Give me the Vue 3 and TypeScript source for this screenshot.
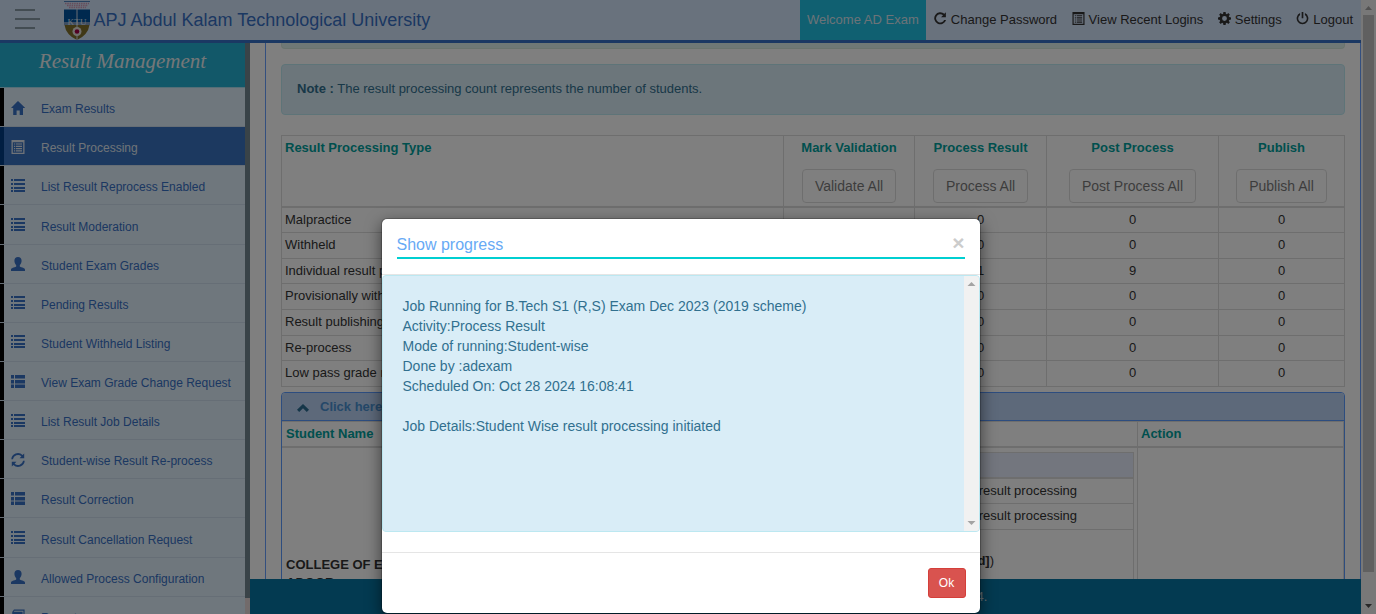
<script setup lang="ts">
interface MenuItem {
  label: string
  icon: string
  active?: boolean
}

const menu: MenuItem[] = [
  { label: 'Exam Results', icon: 'home' },
  { label: 'Result Processing', icon: 'listAlt', active: true },
  { label: 'List Result Reprocess Enabled', icon: 'list' },
  { label: 'Result Moderation', icon: 'list' },
  { label: 'Student Exam Grades', icon: 'user' },
  { label: 'Pending Results', icon: 'list' },
  { label: 'Student Withheld Listing', icon: 'list' },
  { label: 'View Exam Grade Change Request', icon: 'thList' },
  { label: 'List Result Job Details', icon: 'list' },
  { label: 'Student-wise Result Re-process', icon: 'refresh' },
  { label: 'Result Correction', icon: 'thList' },
  { label: 'Result Cancellation Request', icon: 'list' },
  { label: 'Allowed Process Configuration', icon: 'user' },
  { label: 'Reports', icon: 'book' },
]

const links = [
  { label: 'Change Password', icon: 'repeat' },
  { label: 'View Recent Logins', icon: 'listAlt' },
  { label: 'Settings', icon: 'cog' },
  { label: 'Logout', icon: 'off' },
]

/* 14 x 14 glyphs, drawn with the even-odd rule */
const icons: Record<string, string> = {
  home: 'M7 0L14.2 7H12V14H8.7V9.5H5.6V14H2.2V7H0L5.9 1.1V0.9L7 0Z',
  listAlt:
    'M0.5 0H13.5V14H0.5ZM1.8 2.3V12.7H12.2V2.3ZM3 3.4H4.2V4.6H3ZM5 3.4H11V4.6H5ZM3 5.7H4.2V6.9H3ZM5 5.7H11V6.9H5ZM3 8H4.2V9.2H3ZM5 8H11V9.2H5ZM3 10.3H4.2V11.5H3ZM5 10.3H11V11.5H5Z',
  list: 'M0 0H2V2H0ZM3 0H14V2H3ZM0 4H2V6H0ZM3 4H14V6H3ZM0 8H2V10H0ZM3 8H14V10H3ZM0 11H2V13H0ZM3 11H14V13H3Z',
  thList: 'M0 0H3V3.5H0ZM4 0H14V3.5H4ZM0 5H3V8.5H0ZM4 5H14V8.5H4ZM0 9.5H3V13H0ZM4 9.5H14V13H4Z',
  user: 'M7 0C9.3 0 10.6 1.4 10.6 3.8C10.6 5.7 9.8 7.2 8.8 8.3V9.6C10.7 10.7 14 11 14 12.8V14H0V12.8C0 11 3.3 10.7 5.2 9.6V8.3C4.2 7.2 3.4 5.7 3.4 3.8C3.4 1.4 4.7 0 7 0Z',
  refresh:
    'M0.3 6.3A6.6 6.6 0 0 1 11.6 2.1L13.2 0.6V5.2H8.6L10.4 3.3A5.2 5.2 0 0 0 1.9 6.3ZM13.7 7.7A6.6 6.6 0 0 1 2.4 11.9L0.8 13.4V8.8H5.4L3.6 10.7A5.2 5.2 0 0 0 12.1 7.7Z',
  repeat: 'M11.2 2L12.8 0.4V5.6H7.6L9.7 3.5A4.5 4.5 0 1 0 10.9 8.6H13A6.5 6.5 0 1 1 11.2 2Z',
  cog: 'M5.8 0H8.2L8.5 1.9L9.6 2.4L11.1 1.2L12.8 2.9L11.6 4.4L12.1 5.5L14 5.8V8.2L12.1 8.5L11.6 9.6L12.8 11.1L11.1 12.8L9.6 11.6L8.5 12.1L8.2 14H5.8L5.5 12.1L4.4 11.6L2.9 12.8L1.2 11.1L2.4 9.6L1.9 8.5L0 8.2V5.8L1.9 5.5L2.4 4.4L1.2 2.9L2.9 1.2L4.4 2.4L5.5 1.9ZM7 4.4A2.6 2.6 0 1 0 7 9.6A2.6 2.6 0 1 0 7 4.4Z',
  off: 'M6.1 0H7.9V6.8H6.1ZM4.4 1.1V3.1A4.6 4.6 0 1 0 9.6 3.1V1.1A6.3 6.3 0 1 1 4.4 1.1Z',
  book: 'M3 0.5H13.6V11L11.8 13.5H1.2V3ZM3.4 1.7L2.7 2.8H11.6V10.6L12.4 9.6V1.7Z',
}

const actions = [
  { title: 'Mark Validation', button: 'Validate All' },
  { title: 'Process Result', button: 'Process All' },
  { title: 'Post Process', button: 'Post Process All' },
  { title: 'Publish', button: 'Publish All' },
]

const rows: { type: string; counts: string[] }[] = [
  { type: 'Malpractice', counts: ['', '0', '0', '0'] },
  { type: 'Withheld', counts: ['', '0', '0', '0'] },
  { type: 'Individual result processing', counts: ['', '1', '9', '0'] },
  { type: 'Provisionally withheld', counts: ['', '0', '0', '0'] },
  { type: 'Result publishing', counts: ['', '0', '0', '0'] },
  { type: 'Re-process', counts: ['', '0', '0', '0'] },
  { type: 'Low pass grade result', counts: ['', '0', '0', '0'] },
]

const jobLines = [
  'Job Running for B.Tech S1 (R,S) Exam Dec 2023 (2019 scheme)',
  'Activity:Process Result',
  'Mode of running:Student-wise',
  'Done by :adexam',
  'Scheduled On: Oct 28 2024 16:08:41',
  '',
  'Job Details:Student Wise result processing initiated',
]
</script>

<template>
  <div class="screen">
    <div class="page">
      <header class="topbar">
        <div class="burger"><i></i><i></i><i></i></div>
        <svg class="logo" viewBox="0 0 26 40" width="26" height="40">
          <path d="M0 1.5H26" stroke="#4d82bd" stroke-width="1" />
          <path d="M1 3.5H25M3 5.5H24M5 7.5H22" stroke="#cf9bb7" stroke-width="1.4" stroke-dasharray="1.5 .8" />
          <path d="M0 9.5H26V25H0Z" fill="#00529f" />
          <path d="M0 22H26V25H0Z" fill="#7f9cc4" />
          <path d="M.5 25H25.5Q24 35 13 40Q2 35 .5 25Z" fill="#80702c" />
          <path d="M13 8V40" stroke="#d5dbe7" stroke-width="1" />
          <text x="13" y="24.5" text-anchor="middle" textLength="19">KTU</text>
          <circle cx="13" cy="31.5" r="4.5" fill="#e2dfd9" />
          <circle cx="13" cy="31.5" r="2.3" fill="#a40044" />
        </svg>
        <h1>APJ Abdul Kalam Technological University</h1>
        <nav>
          <span class="welcome">Welcome AD Exam</span>
          <a v-for="l in links" :key="l.label">
            <svg viewBox="0 0 14 14" width="13" height="13"><path :d="icons[l.icon]" fill-rule="evenodd" /></svg>{{ l.label }}
          </a>
        </nav>
      </header>

      <div class="body">
        <aside>
          <div class="menu">
            <h2>Result Management</h2>
            <div v-for="m in menu" :key="m.label" class="item" :class="{ active: m.active }">
              <svg viewBox="0 0 14 14" width="14" height="14"><path :d="icons[m.icon]" fill-rule="evenodd" /></svg>
              <span>{{ m.label }}</span>
            </div>
          </div>
          <div class="side-scroll"><div></div></div>
        </aside>

        <div class="right">
          <main>
            <div class="content">
              <div class="alert previous"></div>
              <div class="alert note"><b>Note :</b> The result processing count represents the number of students.</div>

              <table class="types">
                <colgroup>
                  <col class="c-type" /><col class="c-mark" /><col class="c-process" /><col class="c-post" /><col />
                </colgroup>
                <thead>
                  <tr>
                    <th class="first">Result Processing Type</th>
                    <th v-for="a in actions" :key="a.title">
                      <div>{{ a.title }}</div>
                      <button>{{ a.button }}</button>
                    </th>
                  </tr>
                </thead>
                <tbody>
                  <tr v-for="r in rows" :key="r.type">
                    <td class="first">{{ r.type }}</td>
                    <td v-for="(c, i) in r.counts" :key="i">{{ c }}</td>
                  </tr>
                </tbody>
              </table>

              <section class="panel">
                <div class="panel-head">
                  <svg viewBox="0 0 12 8" width="12" height="8"><path d="M6 0L12 5.8L9.8 8L6 4.3L2.2 8L0 5.8Z" /></svg>
                  Click here
                </div>
                <div class="grid">
                  <div class="gh">Student Name</div>
                  <div class="gh"></div>
                  <div class="gh action">Action</div>
                  <div class="gc college">COLLEGE OF ENGINEERING<br />ADOOR</div>
                  <div class="gc nested">
                    <div class="nh"></div>
                    <div class="nr">result processing</div>
                    <div class="nr">result processing</div>
                    <div class="nr tall"><b>d]</b>)</div>
                  </div>
                  <div class="gc"></div>
                </div>
              </section>
            </div>
          </main>
          <footer><span>4.</span></footer>
        </div>
      </div>
    </div>

    <div class="page-scroll">
      <svg width="15" height="15"><path d="M4 10L7.5 6L11 10Z" fill="#a3a3a3" /></svg>
      <div class="thumb"></div>
      <svg class="down" width="15" height="15"><path d="M4 5L7.5 9L11 5Z" fill="#505050" /></svg>
    </div>

    <div class="backdrop"></div>

    <div class="modal">
      <div class="modal-header">
        <h4>Show progress</h4>
        <span class="close">×</span>
      </div>
      <div class="log">
        <div class="log-text">
          <div v-for="(line, i) in jobLines" :key="i">{{ line }}</div>
        </div>
        <div class="log-scroll">
          <svg width="15" height="15"><path d="M3.5 10L7.5 6L11.5 10Z" /></svg>
          <svg width="15" height="15"><path d="M3.5 5L7.5 9L11.5 5Z" /></svg>
        </div>
      </div>
      <div class="modal-footer"><button>Ok</button></div>
    </div>
  </div>
</template>

<style>
html, body { margin: 0; overflow: hidden; }
</style>

<style scoped>
* { box-sizing: border-box; }
.screen {
  position: relative; display: flex; width: 1376px; height: 614px; overflow: hidden;
  font: 13px/18.57px "Liberation Sans", Arial, sans-serif; color: #333; background: #fff;
}
.page { width: 1361px; height: 614px; display: flex; flex-direction: column; }

.topbar { height: 43px; flex: none; display: flex; background: #d3e4fb; border-bottom: 3px solid #3671c6; }
.burger { width: 25px; margin: 9px 24px 0 15px; display: flex; flex-direction: column; gap: 7px; }
.burger i { height: 2px; width: 20px; background: #8798a4; }
.burger i:nth-child(2) { width: 25px; }
.logo { flex: none; }
.logo text { font: 9px "Liberation Serif", serif; fill: #dfe9f8; }
h1 { margin: 0 0 0 3.5px; font-size: 18px; font-weight: 400; line-height: 40px; color: #3770c4; white-space: nowrap; }
nav { display: flex; margin-left: auto; line-height: 40px; white-space: nowrap; padding-right: 8px; }
.welcome { background: #20c0e2; color: #d8e6f0; width: 126px; text-align: center; }
nav a { display: flex; margin-left: 8px; margin-right: 6.5px; color: #333; }
nav a svg { fill: #333; margin: 12px 4px 0 0; flex: none; }
nav a:last-child { margin-right: 0; }

.body { flex: 1; min-height: 0; display: flex; }
aside { width: 250px; flex: none; display: flex; overflow: hidden; }
.menu { width: 245px; flex: none; }
h2 {
  margin: 0; height: 45.1px; padding-top: 5px; background: #24b0d2; color: #e9eff1; text-align: center;
  font: italic 400 21px/26px "Liberation Serif", serif; border-bottom: 1px solid #a8dcee;
}
.item {
  --edge: #000;
  height: 39.14px; display: flex; align-items: center; gap: 16px; padding: 2px 0 0 11px;
  border-bottom: 1px solid #cddcec; background: linear-gradient(var(--edge) 0 0) 0 0 / 4px 100% no-repeat #dfeefa;
  background-clip: padding-box; color: #3770c4; font-size: 12px; line-height: 17px; white-space: nowrap;
}
.item svg { fill: #3770c4; flex: none; margin-top: -1px; }
.item span { padding-top: 3px; }
.item.active { --edge: #003c84; background-color: #3872c0; color: #dfe7f0; }
.item.active svg { fill: #dfe7f0; }
.side-scroll { width: 5px; background: #e4d6d6; }
.side-scroll div { height: 555px; background: #738690; }

.right { width: 1111px; display: flex; flex-direction: column; }
main { height: 536px; padding-left: 15px; overflow: hidden; }
.content { height: 536px; padding: 0 15px; border-left: 1px solid #679eff; border-right: 1px solid #679eff; overflow: hidden; }
footer { height: 35px; background: #0674a2; color: #c3dce8; padding-top: 9px; display: flex; justify-content: center; }
footer span { margin-left: 353px; }

.alert { background: #d9edf7; border: 1px solid #bce8f1; border-radius: 4px; color: #31708f; }
.previous { height: 6px; background: #dff0ed; border-color: #d6e9dd; border-top: 0; border-radius: 0 0 4px 4px; }
.note { height: 51px; margin: 15px 0 20px; padding: 15px; }

table { width: 1064px; table-layout: fixed; border-collapse: collapse; }
.c-type { width: 502px; }
.c-mark { width: 131px; }
.c-process { width: 132px; }
.c-post { width: 172px; }
th, td { border: 1px solid #ddd; padding: 3px; text-align: center; vertical-align: top; white-space: nowrap; }
th { height: 71.2px; padding-bottom: 2px; border-bottom-width: 2px; color: #00a09d; }
th.first, td.first { text-align: left; }
td { height: 25.57px; line-height: 18.57px; }
th button {
  margin-top: 11px; height: 34px; padding: 0 12px; background: #fff; border: 1px solid #ccc; border-radius: 4px;
  font: 14px/20px "Liberation Sans", Arial, sans-serif; color: #333; opacity: .65; vertical-align: top;
}

.panel { margin-top: 5px; border: 1px solid #5a9bff; border-radius: 4px 4px 0 0; }
.panel-head {
  height: 28px; display: flex; align-items: center; gap: 11px; padding-left: 15px; padding-top: 3px;
  background: #bad3f5; border-bottom: 1px solid #5a9bff; border-radius: 3px 3px 0 0; color: #4a90d2; font-weight: 700;
}
.panel-head svg { fill: #2a6c92; }
.grid { display: grid; grid-template-columns: 302px 554px 1fr; grid-template-rows: 27px 230px; }
.gh { padding: 3px 4px; border-bottom: 2px solid #ddd; border-right: 1px solid #ddd; border-top: 1px solid #ddd; color: #00a09d; font-weight: 700; }
.gh.action { padding-left: 3px; }
.gc { border-right: 1px solid #ddd; }
.college { padding: 108px 4px 0; font-weight: 700; }
.nested { padding: 4px 3px 0; }
.nested > div { border: 1px solid #ddd; border-top: 0; text-align: right; }
.nested .nh { height: 27px; background: #e6edfd; border-top: 1px solid #ddd; border-bottom-width: 2px; }
.nested .nr { height: 25.6px; padding: 3px 56px 0 0; }
.nested .tall { height: 180px; padding: 22px 139px 0 0; }

.page-scroll { width: 15px; height: 614px; background: #f1f1f1; display: flex; flex-direction: column; align-items: center; }
.page-scroll .thumb { width: 11px; height: 557px; background: #c1c1c1; }
.page-scroll svg { flex: none; }
.page-scroll .down { margin-top: auto; }

.backdrop { position: absolute; inset: 0; background: rgba(0, 0, 0, .5); }

.modal {
  position: absolute; left: 380.5px; top: 218px; width: 600px; height: 396px; background: #fff; background-clip: padding-box;
  border: 1px solid rgba(0, 0, 0, .2); border-radius: 6px; box-shadow: 0 5px 15px rgba(0, 0, 0, .5);
}
.modal-header { position: relative; height: 56px; padding: 15px 15px 0; border-bottom: 1px solid #e5e5e5; }
h4 { margin: 0; height: 25px; font-size: 16px; font-weight: 400; line-height: 21px; color: #68aaf5; border-bottom: 2px solid #00cfd1; }
.close { position: absolute; right: 15px; top: 13px; font-size: 21px; line-height: 21px; font-weight: 700; color: #ccc; }
.log { height: 257px; display: flex; justify-content: space-between; background: #d9edf7; border: 1px solid #bce8f1; border-radius: 4px; overflow: hidden; }
.log-text { padding: 20px 0 0 20px; font-size: 14px; line-height: 20px; color: #31708f; }
.log-text div { min-height: 20px; }
.log-scroll { width: 15px; background: #f1f1f1; display: flex; flex-direction: column; justify-content: space-between; }
.log-scroll svg { fill: #a3a3a3; }
.modal-footer { margin-top: 20px; padding: 15px 14px; border-top: 1px solid #e5e5e5; display: flex; justify-content: flex-end; }
.modal-footer button {
  width: 38px; height: 30px; padding: 0; background: #d9534f; border: 1px solid #d43f3a; border-radius: 3px;
  font: 12px/18px "Liberation Sans", Arial, sans-serif; color: #fff;
}
</style>
